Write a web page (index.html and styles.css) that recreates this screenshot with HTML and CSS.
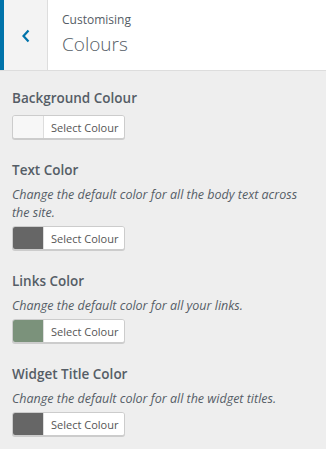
FILE: index.html
```html
<!DOCTYPE html>
<html lang="en">
<head>
    <meta charset="UTF-8">
    <meta name="viewport" content="width=device-width, initial-scale=1.0">
    <title>Customising - Colours</title>
    <link rel="stylesheet" href="styles.css">
</head>
<body>
    <div class="panel">
        <div class="panel-header">
            <button class="back-button" aria-label="Back">
                <svg width="10" height="14" viewBox="0 0 10 14">
                    <path d="M7.5 1.5 L2.5 7 L7.5 12.5" fill="none" stroke="#0073aa" stroke-width="2.2"/>
                </svg>
            </button>
            <div class="panel-title">
                <span class="panel-subtitle">Customising</span>
                <h1>Colours</h1>
            </div>
        </div>

        <ul class="controls">
            <li class="control">
                <span class="control-title">Background Colour</span>
                <button class="color-result">
                    <span class="swatch swatch-white"></span>
                    <span class="color-label">Select Colour</span>
                </button>
            </li>

            <li class="control">
                <span class="control-title">Text Color</span>
                <span class="description">Change the default color for all the body text across the site.</span>
                <button class="color-result">
                    <span class="swatch swatch-gray"></span>
                    <span class="color-label">Select Colour</span>
                </button>
            </li>

            <li class="control">
                <span class="control-title">Links Color</span>
                <span class="description">Change the default color for all your links.</span>
                <button class="color-result">
                    <span class="swatch swatch-green"></span>
                    <span class="color-label">Select Colour</span>
                </button>
            </li>

            <li class="control">
                <span class="control-title">Widget Title Color</span>
                <span class="description">Change the default color for all the widget titles.</span>
                <button class="color-result">
                    <span class="swatch swatch-gray"></span>
                    <span class="color-label">Select Colour</span>
                </button>
            </li>
        </ul>
    </div>
</body>
</html>
```

FILE: styles.css
```css
:root {
    --text: #555d66;
    --blue: #0073aa;
    --border: #dddddd;
    --bg: #eeeeee;
}

* {
    margin: 0;
    padding: 0;
    box-sizing: border-box;
}

body {
    font-family: 'Open Sans', sans-serif;
    background-color: var(--bg);
    color: var(--text);
}

.panel-header {
    display: flex;
    height: 71px;
    background: #ffffff;
    border-bottom: 1px solid var(--border);
}

.back-button {
    width: 48px;
    flex-shrink: 0;
    display: flex;
    align-items: center;
    justify-content: center;
    background: #f3f3f3;
    border: none;
    border-left: 4px solid var(--blue);
    border-right: 1px solid var(--border);
    padding-top: 2px;
    cursor: pointer;
}

.panel-title {
    padding: 11px 14px 0;
    display: flex;
    flex-direction: column;
}

.panel-subtitle {
    font-size: 12px;
    line-height: 18px;
}

.panel-title h1 {
    font-size: 19px;
    font-weight: 300;
    line-height: 28px;
    margin-top: 1px;
}

.controls {
    list-style: none;
    padding: 17px 12px 0;
}

.control {
    display: flex;
    flex-direction: column;
    align-items: flex-start;
    margin-bottom: 21px;
}

.control-title {
    font-size: 13.5px;
    font-weight: 600;
    line-height: 21px;
    margin-bottom: 6px;
}

.description {
    font-size: 12.5px;
    font-style: italic;
    line-height: 18px;
    margin-top: -1px;
    margin-bottom: 4px;
}

.color-result {
    display: flex;
    height: 24px;
    border: 1px solid #cccccc;
    border-radius: 3px;
    box-shadow: 0 1px 0 #cccccc;
    background: #f7f7f7;
    overflow: hidden;
    cursor: pointer;
    font-family: inherit;
}

.swatch {
    width: 30px;
    height: 100%;
}

.swatch-white {
    background: #f7f7f7;
}

.swatch-gray {
    background: #666666;
}

.swatch-green {
    background: #7b927b;
}

.color-label {
    display: flex;
    align-items: center;
    height: 100%;
    padding: 0 6px 0 7px;
    border-left: 1px solid #dddddd;
    background: #ffffff;
    color: #555555;
    font-size: 11px;
}
```
